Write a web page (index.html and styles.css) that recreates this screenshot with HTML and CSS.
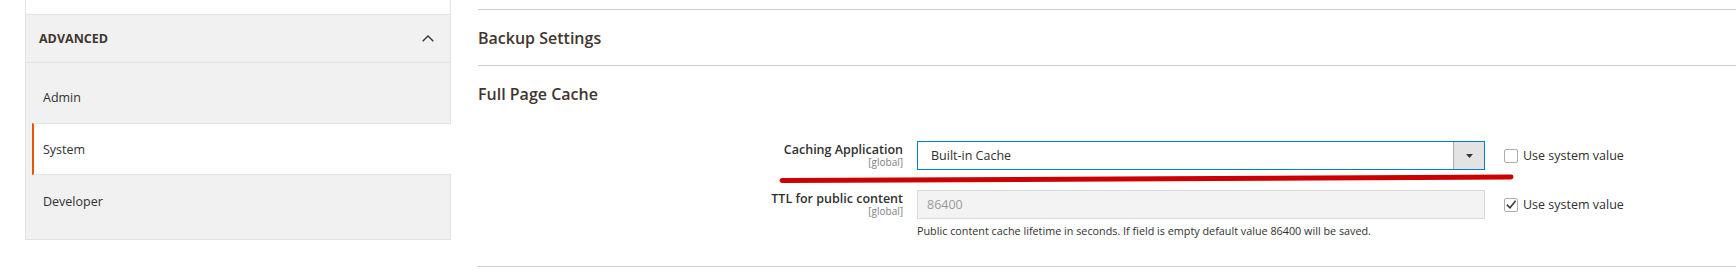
FILE: index.html
```html
<!DOCTYPE html>
<html>
<head>
  <title>Configuration - System</title>
  <link rel="stylesheet" href="styles.css">
</head>
<body>
  <div class="page">
    <div class="sidebar">
      <div class="tab-prev"></div>
      <div class="tab-title">
        <span>Advanced</span>
        <svg class="chevron" width="12" height="7" viewBox="0 0 12 7">
          <polyline points="0.7,6.3 6,1 11.3,6.3" fill="none" stroke="#41362f" stroke-width="1.4"/>
        </svg>
      </div>
      <ul class="tab-items">
        <li class="tab-item">Admin</li>
        <li class="tab-item active">System</li>
        <li class="tab-item">Developer</li>
      </ul>
    </div>

    <div class="main">
      <div class="section">
        <div class="section-title">Backup Settings</div>
      </div>
      <div class="section section-open">
        <div class="section-title">Full Page Cache</div>
        <div class="fieldset">
          <div class="row">
            <div class="row-label">
              <span>Caching Application</span>
              <span class="scope">[global]</span>
            </div>
            <div class="row-control">
              <div class="select">
                <span class="select-value">Built-in Cache</span>
                <span class="select-button">
                  <svg width="7" height="4" viewBox="0 0 7 4"><polygon points="0,0 7,0 3.5,4" fill="#41362f"/></svg>
                </span>
              </div>
            </div>
            <label class="row-use">
              <span class="checkbox"></span>
              Use system value
            </label>
          </div>

          <div class="row">
            <div class="row-label">
              <span>TTL for public content</span>
              <span class="scope">[global]</span>
            </div>
            <div class="row-control">
              <div class="input disabled">86400</div>
              <div class="note">Public content cache lifetime in seconds. If field is empty default value 86400 will be saved.</div>
            </div>
            <label class="row-use">
              <span class="checkbox">
                <svg width="12" height="12" viewBox="0 0 12 12"><polyline points="1.8,5.6 5,8.8 10.6,1.8" fill="none" stroke="#41362f" stroke-width="1.5"/></svg>
              </span>
              Use system value
            </label>
          </div>
        </div>
      </div>
    </div>
  </div>

  <!-- hand-drawn red mark under the first row -->
  <svg class="mark" width="760" height="14" viewBox="0 0 760 14">
    <path d="M4,9.5 C200,9 500,7 733,6" fill="none" stroke="#cc0000" stroke-width="5" stroke-linecap="round"/>
  </svg>
</body>
</html>
```

FILE: styles.css
```css
body {
  margin: 0;
  font-family: "Open Sans", sans-serif;
  color: #303030;
  background: #fff;
}

.page {
  display: flex;
  align-items: flex-start;
}

/* left tabs */
.sidebar {
  margin-left: 25px;
  width: 424px;
  flex: none;
  background: #f1f1f1;
  border: 1px solid #e3e3e3;
  border-top: none;
}

.tab-prev {
  height: 14px;
  background: #fff;
  border-bottom: 1px solid #e3e3e3;
}

.tab-title {
  height: 47px;
  display: flex;
  align-items: center;
  justify-content: space-between;
  padding: 0 16px 0 13px;
  font-size: 12.5px;
  font-weight: 700;
  text-transform: uppercase;
  color: #41362f;
  border-bottom: 1px solid #e3e3e3;
}

.tab-items {
  list-style: none;
  margin: 0;
  padding: 8px 0 12px 6px;
}

.tab-item {
  height: 50px;
  display: flex;
  align-items: center;
  padding-left: 9px;
  font-size: 12.5px;
  border: 1px solid transparent;
  border-left: 2px solid transparent;
  border-right: none;
}

.tab-item.active {
  background: #fff;
  border-color: #e3e3e3;
  border-left-color: #eb5202;
  margin-right: -1px;
}

/* right content */
.main {
  flex: 1;
  margin-left: 27px;
  margin-top: 9px;
}

.section {
  border-top: 1px solid #cccccc;
}

.section-open {
  border-bottom: 1px solid #cccccc;
  padding-bottom: 27px;
}

.section-title {
  height: 55px;
  display: flex;
  align-items: center;
  font-size: 16px;
  font-weight: 600;
  color: #41362f;
}

.fieldset {
  padding-top: 20px;
}

.row {
  display: flex;
  align-items: flex-start;
  margin-bottom: 20px;
}

.row:last-child {
  margin-bottom: 0;
}

.row-label {
  width: 439px;
  box-sizing: border-box;
  padding: 1px 14px 0 0;
  text-align: right;
  font-size: 12.5px;
  font-weight: 600;
  line-height: 16px;
}

.scope {
  display: block;
  margin-top: -1px;
  font-size: 10px;
  font-weight: 400;
  line-height: 10px;
  color: #808080;
}

.row-control {
  width: 568px;
}

.select {
  height: 29px;
  box-sizing: border-box;
  display: flex;
  border: 1px solid #007bdb;
  background: #fff;
}

.select-value {
  flex: 1;
  padding-left: 13px;
  font-size: 12.5px;
  line-height: 27px;
}

.select-button {
  width: 30px;
  display: flex;
  align-items: center;
  justify-content: center;
  background: #e3e3e3;
  border-left: 1px solid #adadad;
}

.input {
  height: 29px;
  box-sizing: border-box;
  padding-left: 9px;
  font-size: 12.5px;
  line-height: 27px;
  border: 1px solid #dadada;
}

.input.disabled {
  background: #f3f3f3;
  color: #9a9a9a;
}

.note {
  margin-top: 4px;
  font-size: 10.8px;
  line-height: 16px;
}

.row-use {
  display: flex;
  align-items: center;
  height: 29px;
  margin-left: 19px;
  font-size: 12.5px;
  color: #303030;
}

.checkbox {
  width: 12px;
  height: 12px;
  margin-right: 5px;
  display: flex;
  align-items: center;
  justify-content: center;
  border: 1px solid #adadad;
  border-radius: 2px;
  background: #fff;
}

.mark {
  position: absolute;
  left: 778px;
  top: 171px;
}
```
